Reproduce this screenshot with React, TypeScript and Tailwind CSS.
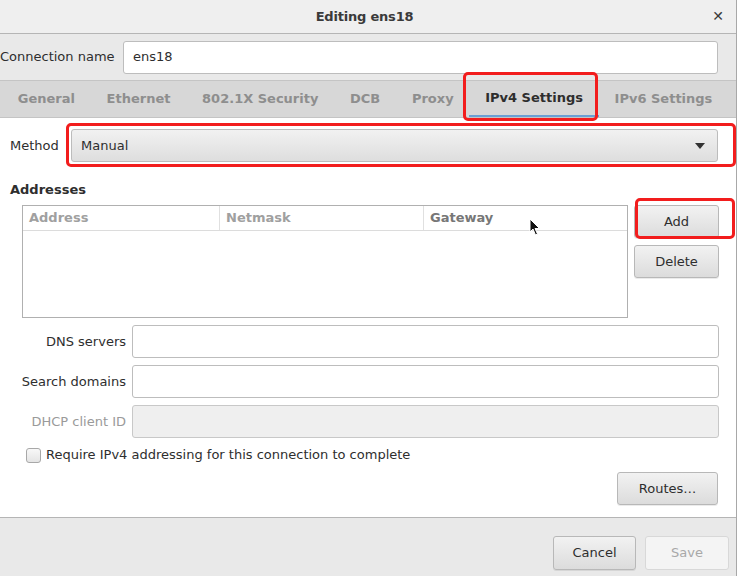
import React from 'react';

const tabs = ['General', 'Ethernet', '802.1X Security', 'DCB', 'Proxy', 'IPv4 Settings', 'IPv6 Settings'];

function GtkButton({ label, disabled, className }: { label: string; disabled?: boolean; className?: string }) {
    return (
        <div
            className={`flex items-center justify-center rounded-[3px] border text-[13px] ${
                disabled
                    ? 'border-[#d8d8d8] bg-[#f4f4f4] text-[#a8a8a8]'
                    : 'border-[#b8b8b8] bg-gradient-to-b from-[#f2f2f2] to-[#dcdcdc] text-[#2e2e2e] shadow-[0_1px_0_rgba(0,0,0,0.08)]'
            } ${className ?? ''}`}
        >
            {label}
        </div>
    );
}

function Field({ label, disabled }: { label: string; disabled?: boolean }) {
    return (
        <div className="flex items-center h-[33px]">
            <div className={`w-[126px] text-right text-[13px] whitespace-nowrap ${disabled ? 'text-[#9a9a9a]' : 'text-[#2e2e2e]'}`}>
                {label}
            </div>
            <div
                className={`ml-[6px] h-[33px] w-[587px] rounded-[3px] border ${
                    disabled ? 'border-[#c8c8c8] bg-[#efefef]' : 'border-[#bdbdbd] bg-white'
                }`}
            />
        </div>
    );
}

export default function App() {
    return (
        <div
            className="relative w-[739px] h-[576px] overflow-hidden bg-white"
            style={{ fontFamily: '"DejaVu Sans", sans-serif' }}
        >
            <div className="flex flex-col w-[737px] h-full border-r border-[#a8a8a8]">
                {/* title bar */}
                <div className="relative flex items-center justify-center h-[34px] shrink-0 pr-[7px] bg-[#efefef] border-b border-[#b5b5b5]">
                    <span className="text-[13px] font-bold tracking-[-0.2px] text-[#3a3a3a]">Editing ens18</span>
                    <span className="absolute right-[12px] top-[6px] text-[14px] font-bold text-[#3a3a3a]">✕</span>
                </div>

                {/* connection name */}
                <div className="flex items-center h-[46px] shrink-0 bg-[#e9e9e9]">
                    <div className="w-[110px] text-right text-[13px] text-[#2e2e2e] whitespace-nowrap">Connection name</div>
                    <div className="ml-[13px] flex items-center h-[33px] w-[595px] rounded-[3px] border border-[#bdbdbd] bg-white px-[9px] text-[13px] text-[#2e2e2e]">
                        ens18
                    </div>
                </div>

                {/* tabs */}
                <div className="flex items-stretch h-[38px] shrink-0 bg-[#d7d7d7] border-y border-[#c4c4c4] pl-[2px]">
                    {tabs.map((t) => {
                        const active = t === 'IPv4 Settings';
                        return (
                            <div
                                key={t}
                                className={`flex items-center px-[15.8px] text-[13px] font-bold whitespace-nowrap ${
                                    active ? 'text-[#2e2e2e] border-b-2 border-[#6a9fd4]' : 'text-[#8e8e8e]'
                                }`}
                            >
                                {t}
                            </div>
                        );
                    })}
                </div>

                {/* content */}
                <div className="flex flex-col h-[400px] shrink-0 bg-white border-b border-[#b5b5b5]">
                    <div className="flex items-center mt-[11px] h-[33px]">
                        <div className="w-[60px] pl-[10px] text-[13px] text-[#2e2e2e]">Method</div>
                        <div className="ml-[11px] flex items-center justify-between h-[33px] w-[647px] rounded-[3px] border border-[#bcbcbc] bg-gradient-to-b from-[#f1f1f1] to-[#dedede] pl-[9px] pr-[12px] text-[13px] text-[#2e2e2e]">
                            <span>Manual</span>
                            <svg width="10" height="6" viewBox="0 0 10 6">
                                <path d="M0 0 L10 0 L5 6 Z" fill="#333" />
                            </svg>
                        </div>
                    </div>

                    <div className="mt-[18px] pl-[10px] text-[13px] leading-[19.5px] font-bold text-[#2e2e2e]">Addresses</div>

                    <div className="flex mt-[5.5px]">
                        <div className="ml-[22px] w-[606px] h-[113px] border border-[#b0b0b0] bg-white">
                            <div className="flex h-[25px] border-b border-[#dcdcdc] text-[13px] font-bold">
                                <div className="w-[197px] pl-[6px] flex items-center border-r border-[#e0e0e0] text-[#a0a0a0]">Address</div>
                                <div className="w-[204px] pl-[6px] flex items-center border-r border-[#e0e0e0] text-[#a0a0a0]">Netmask</div>
                                <div className="flex-1 pl-[6px] flex items-center text-[#777]">Gateway</div>
                            </div>
                        </div>
                        <div className="ml-[6px] flex flex-col gap-[7px]">
                            <GtkButton label="Add" className="w-[85px] h-[33px]" />
                            <GtkButton label="Delete" className="w-[85px] h-[33px]" />
                        </div>
                    </div>

                    <div className="flex flex-col gap-[7px] mt-[7px]">
                        <Field label="DNS servers" />
                        <Field label="Search domains" />
                        <Field label="DHCP client ID" disabled />
                    </div>

                    <div className="flex items-center mt-[8px] ml-[26px] h-[18px]">
                        <div className="w-[15px] h-[15px] rounded-[3px] border border-[#a8a8a8] bg-gradient-to-b from-[#f8f8f8] to-[#e4e4e4]" />
                        <span className="ml-[5px] text-[13px] text-[#2e2e2e]">Require IPv4 addressing for this connection to complete</span>
                    </div>

                    <div className="flex justify-end mt-[8px] pr-[18px]">
                        <GtkButton label="Routes…" className="w-[101px] h-[33px]" />
                    </div>
                </div>

                {/* footer */}
                <div className="flex flex-1 justify-end items-start pt-[18px] pr-[7px] gap-[9px] bg-[#e9e9e9]">
                    <GtkButton label="Cancel" className="w-[83px] h-[34px]" />
                    <GtkButton label="Save" disabled className="w-[84px] h-[34px]" />
                </div>
            </div>

            {/* annotation overlays */}
            <div className="absolute left-[463px] top-[72px] w-[135px] h-[49px] rounded-[5px] border-[3px] border-[#f21d1d]" />
            <div className="absolute left-[66px] top-[123px] w-[670px] h-[44px] rounded-[5px] border-[3px] border-[#f21d1d]" />
            <div className="absolute left-[635px] top-[198px] w-[100px] h-[41px] rounded-[5px] border-[3px] border-[#f21d1d]" />

            {/* mouse cursor */}
            <svg className="absolute left-[529px] top-[218px]" width="12" height="18" viewBox="0 0 12 18">
                <path d="M1 1 L1 14 L4 11 L6.5 17 L8.5 16 L6 10.5 L10.5 10.5 Z" fill="#111" stroke="#fff" strokeWidth="1" />
            </svg>
        </div>
    );
}
